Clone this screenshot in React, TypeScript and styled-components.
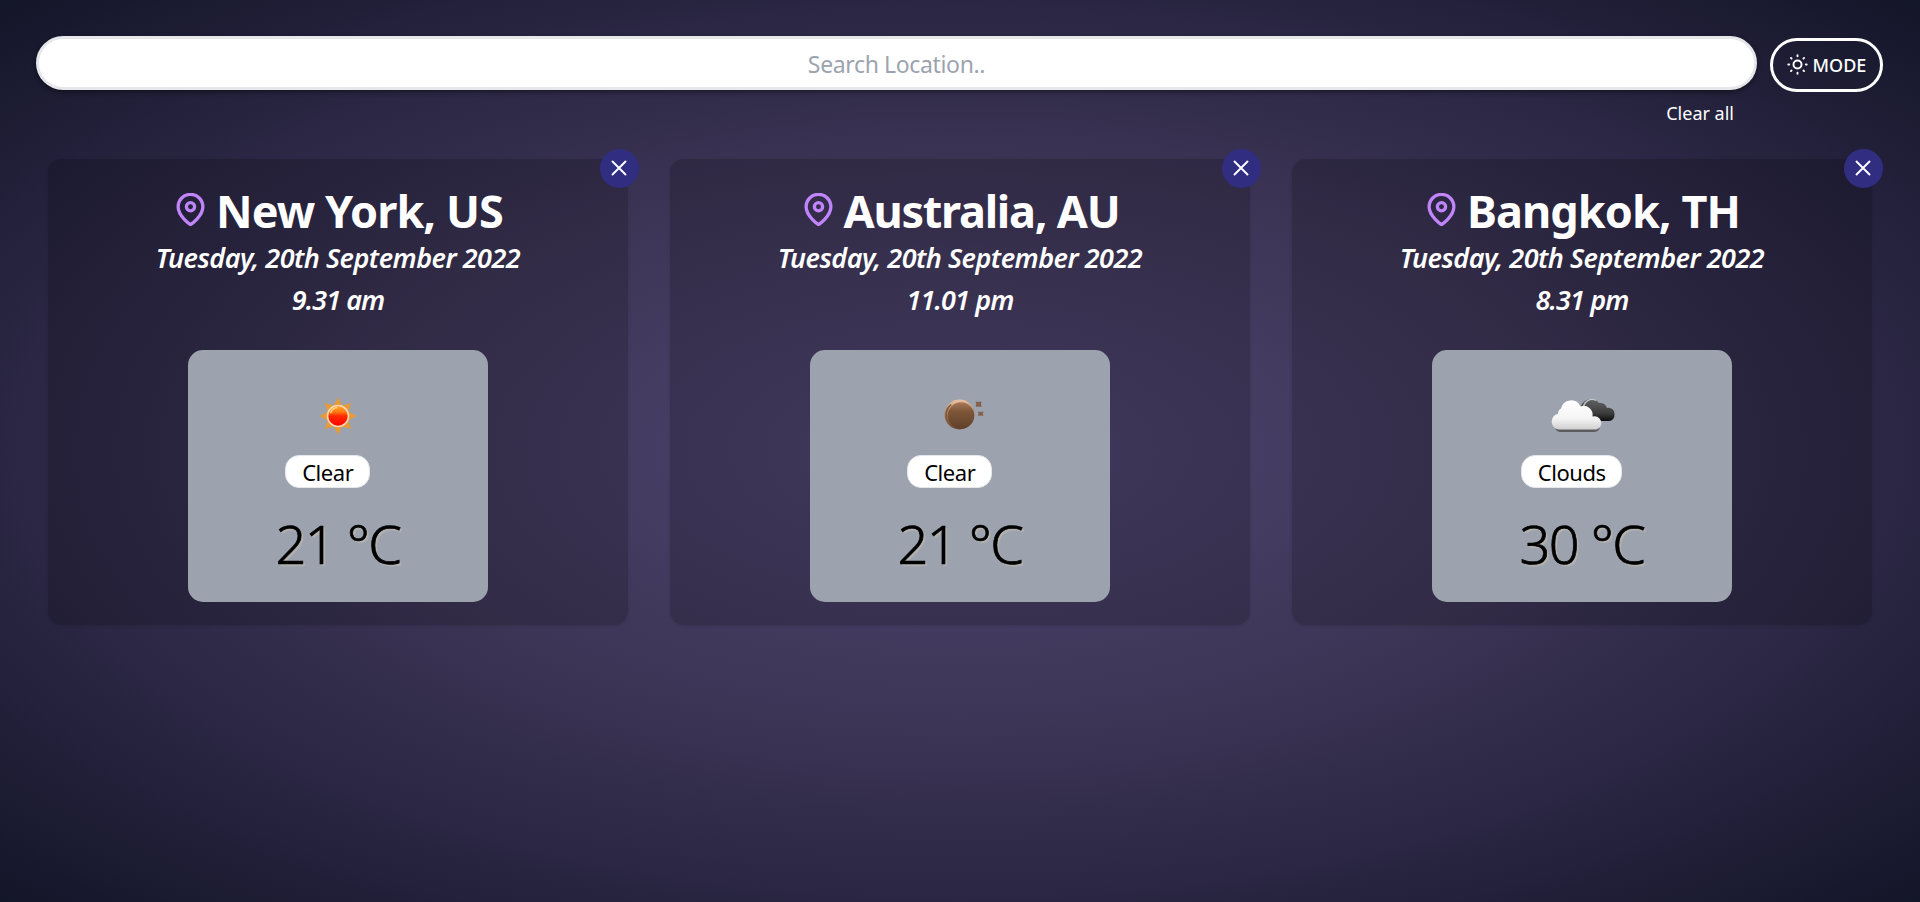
import React from "react";
import styled, { createGlobalStyle } from "styled-components";
import { FiMapPin } from "react-icons/fi";

const Global = createGlobalStyle`
  * { box-sizing: border-box; }
  html, body, #root { height: 100%; }
  body { margin: 0; font-family: "Noto Sans", "Open Sans", sans-serif; }
  button, input { font: inherit; }
  h1, p { margin: 0; }
`;

const Page = styled.main`
  min-height: 100%;
  padding: 36px 37px 0 36px;
  overflow: hidden;
  color: #fff;
  background: radial-gradient(ellipse at center, #4e4570 0%, #3d3556 43%, #2a2643 70%, #131528 100%);
`;

const TopBar = styled.header`
  display: flex;
  align-items: flex-start;
  gap: 13px;
`;

const Search = styled.input`
  width: 1721px;
  height: 54px;
  padding: 1px 12px 0;
  border: 3px solid #e5e7eb;
  border-radius: 27px;
  background: #fff;
  box-shadow: 0 2px 5px rgba(0, 0, 0, 0.45);
  text-align: center;
  font-size: 23px;
  letter-spacing: -0.36px;
  color: #111;
  outline: none;
  &::placeholder { color: #9ca3af; opacity: 1; }
`;

const ModeButton = styled.button`
  display: flex;
  align-items: center;
  justify-content: center;
  gap: 5px;
  width: 113px;
  height: 54px;
  margin-top: 2px;
  padding: 0 0 1px;
  border: 3px solid #fff;
  border-radius: 27px;
  background: transparent;
  color: #fff;
  font-size: 18px;
  font-weight: 500;
`;

const ClearRow = styled.div`
  display: flex;
  justify-content: flex-end;
  height: 59px;
  padding: 7px 149px 0 0;
`;

const ClearAll = styled.button`
  height: 28px;
  padding: 0;
  border: 0;
  background: none;
  color: #fff;
  font-size: 18px;
  line-height: 28px;
`;

const Cards = styled.section`
  display: grid;
  grid-template-columns: repeat(3, 580px);
  gap: 42px;
  padding: 8px 0 0 12px;
`;

const Card = styled.article`
  position: relative;
  display: flex;
  flex-direction: column;
  align-items: center;
  height: 466px;
  padding-top: 22px;
  border-radius: 14px;
  background: rgba(0, 0, 0, 0.17);
  box-shadow: 0 1px 3px rgba(0, 0, 0, 0.12);
`;

const Close = styled.button`
  position: absolute;
  top: -10px;
  right: -11px;
  display: grid;
  place-items: center;
  width: 39px;
  height: 39px;
  padding: 0 1px 1px 0;
  border: 0;
  border-radius: 50%;
  background: #312e81;
  color: #fff;
`;

const City = styled.h1<{ $tracking: number }>`
  display: flex;
  align-items: center;
  gap: 9px;
  height: 60px;
  padding-left: 1px;
  font-size: 45px;
  line-height: 60px;
  font-weight: 700;
  letter-spacing: ${(p) => p.$tracking}px;
  white-space: nowrap;
`;

const Pin = styled(FiMapPin)`
  color: #c084fc;
  stroke-width: 2.4;
  margin-bottom: 4px;
`;

const When = styled.p<{ $tracking: number }>`
  height: 42px;
  font-size: 27px;
  line-height: 34px;
  font-style: italic;
  font-weight: 600;
  letter-spacing: ${(p) => p.$tracking}px;
  white-space: nowrap;
`;

const Panel = styled.div`
  display: flex;
  flex-direction: column;
  align-items: center;
  width: 300px;
  height: 252px;
  margin-top: 25px;
  padding-top: 40px;
  border-radius: 15px;
  background: #9ca3af;
  color: #000;
`;

const Badge = styled.span`
  height: 33px;
  margin: 15px 21px 0 0;
  padding: 0 15.5px 0 16px;
  border: 1px solid #e5e7eb;
  border-radius: 14px;
  background: #fff;
  font-size: 22px;
  line-height: 32px;
  letter-spacing: -0.45px;
`;

const Temp = styled.p`
  margin-top: 17px;
  font-size: 54px;
  line-height: 76px;
  font-weight: 300;
  letter-spacing: -1.5px;
  -webkit-text-stroke: 0.7px #000;
  text-shadow: 2px 2px 1px #b5b2ae;
`;

const SunGlyph = () => (
  <svg width="21" height="21" viewBox="0 0 24 24" fill="none" stroke="currentColor" strokeWidth="2.2">
    <circle cx="12" cy="12" r="4.6" />
    <path strokeLinecap="round" d="M12 1.500v1M12 21.500v1M1.500 12h1M21.500 12h1M4.500 4.500l.7.700M18.800 18.800l.7.700M4.500 19.500l.7-.7M18.800 5.200l.7-.7" />
  </svg>
);

const Sun = () => (
  <svg width="80" height="50" viewBox="0 0 80 50">
    <defs>
      <linearGradient id="sunFill" x1="0" y1="0" x2="0" y2="1">
        <stop offset="0" stopColor="#ffa52c" />
        <stop offset=".3" stopColor="#ff7d14" />
        <stop offset=".5" stopColor="#ff2a00" />
        <stop offset="1" stopColor="#ff0000" />
      </linearGradient>
    </defs>
    {[0, 45, 90, 135, 180, 225, 270, 315].map((a) => (
      <path key={a} d="M35 17L40 7.5L45 17z" fill="#e79a35" transform={`rotate(${a} 40 26)`} />
    ))}
    <circle cx="40" cy="26" r="10.5" fill="url(#sunFill)" stroke="#f8d8b4" strokeWidth="1.6" />
    <path d="M32.5 23a8 8 0 0 1 7-5.5" fill="none" stroke="#ffd070" strokeWidth="1.5" />
  </svg>
);

const Moon = () => (
  <svg width="80" height="50" viewBox="0 0 80 50">
    <defs>
      <linearGradient id="moonFill" x1="0" y1="0" x2="0" y2="1">
        <stop offset="0" stopColor="#a87858" />
        <stop offset=".35" stopColor="#7d5637" />
        <stop offset="1" stopColor="#60402a" />
      </linearGradient>
      <linearGradient id="moonRim" x1="0" y1="0" x2="0" y2="1">
        <stop offset="0" stopColor="#ecc4a4" />
        <stop offset=".6" stopColor="#9a6d4c" />
        <stop offset="1" stopColor="#66442c" />
      </linearGradient>
    </defs>
    <circle cx="39.5" cy="24.5" r="15" fill="url(#moonRim)" />
    <path d="M27.5 31a13.5 13.5 0 0 1 3.5-16.5" fill="none" stroke="#7d583e" strokeWidth="1.6" />
    <circle cx="41" cy="25.5" r="13.2" fill="url(#moonFill)" />
    <path d="M55.5 11.500l3 .6 3-.6-.5 2.800.5 2.700-3-.6-3 .6.800-2.700zM58 21.500l2.600.5 2.800-.5-.5 2.200.5 2.300-2.800-.6-2.600.6.500-2.300z" fill="#84604a" />
  </svg>
);

const Clouds = () => (
  <svg width="80" height="50" viewBox="0 0 80 50">
    <defs>
      <linearGradient id="darkCloud" x1="0" y1="0" x2="0" y2="1">
        <stop offset="0" stopColor="#626262" />
        <stop offset=".65" stopColor="#3c3c3c" />
        <stop offset="1" stopColor="#0c0c0c" />
      </linearGradient>
      <linearGradient id="lightCloud" x1="0" y1="0" x2="0" y2="1">
        <stop offset="0" stopColor="#fff" />
        <stop offset=".6" stopColor="#f6f6f6" />
        <stop offset="1" stopColor="#d0d0d0" />
      </linearGradient>
    </defs>
    <path d="M38.5 18a10.500 10.500 0 0 1 18.500-5 7.500 7.500 0 0 1 8 5 6 6 0 0 1 7.500 6.500 6 6 0 0 1-5.500 6.500H48z" fill="url(#darkCloud)" />
    <path d="M41.5 17.500a8.500 8.500 0 0 1 12.500-7" fill="none" stroke="#c4c6ca" strokeWidth="1.3" />
    <path d="M18 42h35a7 7 0 0 0 5-4H13a6 6 0 0 0 5 4z" fill="#5c5c5e" />
    <path d="M17 39.500a8 8 0 0 1-1-15.800 6 6 0 0 1 3-5.200 10.300 10.300 0 0 1 19.500-2 9 9 0 0 1 12 10 6.300 6.300 0 0 1 4 13z" fill="url(#lightCloud)" />
  </svg>
);

const cards = [
  { city: "New York, US", tracking: -0.95, time: "9.31 am", Icon: Sun, sky: "Clear", temp: 21 },
  { city: "Australia, AU", tracking: -1.25, time: "11.01 pm", Icon: Moon, sky: "Clear", temp: 21 },
  { city: "Bangkok, TH", tracking: -0.95, time: "8.31 pm", Icon: Clouds, sky: "Clouds", temp: 30 },
];

export default function App() {
  return (
    <Page>
      <Global />
      <TopBar>
        <Search placeholder="Search Location.." />
        <ModeButton><SunGlyph />MODE</ModeButton>
      </TopBar>
      <ClearRow><ClearAll>Clear all</ClearAll></ClearRow>
      <Cards>
        {cards.map(({ city, tracking, time, Icon, sky, temp }) => (
          <Card key={city}>
            <Close aria-label="Remove">
              <svg width="16" height="16" viewBox="0 0 16 16" stroke="currentColor" strokeWidth="1.9" strokeLinecap="round">
                <path d="M1.5 1.5l13 13M14.5 1.5l-13 13" />
              </svg>
            </Close>
            <City $tracking={tracking}><Pin size={33} />{city}</City>
            <When $tracking={-0.5}>Tuesday, 20th September 2022</When>
            <When $tracking={-0.9}>{time}</When>
            <Panel>
              <Icon />
              <Badge>{sky}</Badge>
              <Temp>{temp} °C</Temp>
            </Panel>
          </Card>
        ))}
      </Cards>
    </Page>
  );
}
